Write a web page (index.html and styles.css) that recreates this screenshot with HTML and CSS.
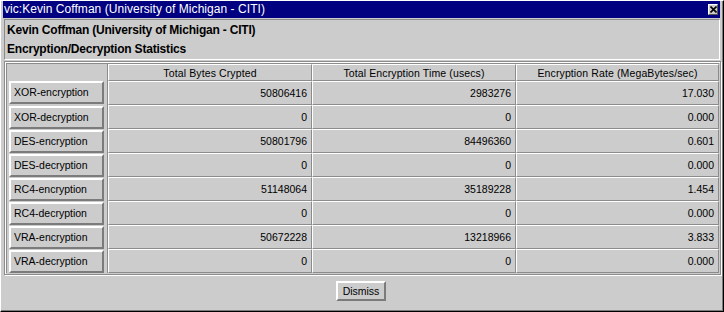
FILE: index.html
```html
<!DOCTYPE html>
<html>
<head>
<meta charset="utf-8">
<link rel="stylesheet" href="styles.css">
</head>
<body>
<div class="window">
  <div class="titlebar">
    <span class="title">vic:Kevin Coffman (University of Michigan - CITI)</span>
    <span class="close"><svg width="7" height="7" viewBox="0 0 7 7"><path d="M0.5 0.5 L6.5 6.5 M6.5 0.5 L0.5 6.5" stroke="#000" stroke-width="1.6"/></svg></span>
  </div>
  <div class="header">
    <div class="hline">Kevin Coffman (University of Michigan - CITI)</div>
    <div class="hline">Encryption/Decryption Statistics</div>
  </div>
  <div class="panel">
    <table class="stats">
      <colgroup><col class="c1"><col class="c2"><col class="c3"><col class="c4"></colgroup>
      <tr class="head"><th class="lab"></th><th>Total Bytes Crypted</th><th>Total Encryption Time (usecs)</th><th>Encryption Rate (MegaBytes/sec)</th></tr>
      <tr><td class="lab"><span class="btn">XOR-encryption</span></td><td>50806416</td><td>2983276</td><td>17.030</td></tr>
      <tr><td class="lab"><span class="btn">XOR-decryption</span></td><td>0</td><td>0</td><td>0.000</td></tr>
      <tr><td class="lab"><span class="btn">DES-encryption</span></td><td>50801796</td><td>84496360</td><td>0.601</td></tr>
      <tr><td class="lab"><span class="btn">DES-decryption</span></td><td>0</td><td>0</td><td>0.000</td></tr>
      <tr><td class="lab"><span class="btn">RC4-encryption</span></td><td>51148064</td><td>35189228</td><td>1.454</td></tr>
      <tr><td class="lab"><span class="btn">RC4-decryption</span></td><td>0</td><td>0</td><td>0.000</td></tr>
      <tr><td class="lab"><span class="btn">VRA-encryption</span></td><td>50672228</td><td>13218966</td><td>3.833</td></tr>
      <tr><td class="lab"><span class="btn">VRA-decryption</span></td><td>0</td><td>0</td><td>0.000</td></tr>
    </table>
  </div>
  <div class="footer"><span class="dismiss">Dismiss</span></div>
</div>
</body>
</html>
```
FILE: styles.css
```css
html, body { margin: 0; padding: 0; background: #cccccc; }
body { font-family: "Liberation Sans", Arial, sans-serif; }
.window {
  box-sizing: border-box;
  width: 724px; height: 312px;
  background: #cccccc;
  border-top: 1px solid #ffffff;
  border-left: 1px solid #ffffff;
  border-right: 1px solid #000000;
  border-bottom: 1px solid #000000;
  box-shadow: inset -1px -1px 0 #7b7b7b;
  padding: 0 3px 0 1px;
  display: flex; flex-direction: column;
}
.titlebar {
  height: 17px;
  margin-left: 1px;
  background: #000080;
  color: #ffffff;
  display: flex; align-items: center; justify-content: space-between;
  font-size: 12px;
  padding-left: 1px;
}
.title { line-height: 17px; letter-spacing: 0.05px; }
.close {
  box-sizing: border-box;
  width: 10px; height: 11px;
  margin-right: 2px;
  background: #cccccc;
  border-top: 1px solid #ffffff; border-left: 1px solid #ffffff;
  border-right: 1px solid #555; border-bottom: 1px solid #555;
  display: flex; align-items: center; justify-content: center;
}
.header {
  margin-top: 1px;
  margin-left: 2px;
  height: 41px;
  box-sizing: border-box;
  border-top: 1px solid #8b8b8b; border-left: 1px solid #8b8b8b;
  border-right: 1px solid #ffffff; border-bottom: 1px solid #ffffff;
  padding: 1px 0 0 2px;
  font-weight: bold;
  font-size: 12px;
  color: #000;
}
.hline { height: 19px; line-height: 19px; letter-spacing: -0.2px; }
.panel {
  margin-top: 1px;
  margin-left: 2px;
  margin-right: -1px;
  box-sizing: border-box;
  border: 1px solid #8b8b8b;
  box-shadow: inset 1px 1px 0 #ffffff, 1px 1px 0 #ffffff;
  padding: 1px;
}
.stats {
  border-collapse: separate; border-spacing: 0;
  table-layout: fixed;
  width: 713px;
  border-top: 1px solid #8b8b8b; border-left: 1px solid #8b8b8b;
  font-size: 10.5px;
  color: #000;
}
.c1 { width: 101px; } .c2 { width: 204px; } .c3 { width: 204px; } .c4 { width: 203px; }
.stats th, .stats td {
  box-sizing: border-box;
  padding: 0 4px 0 0;
  border-top: 1px solid #ffffff; border-left: 1px solid #ffffff;
  border-right: 1px solid #8b8b8b; border-bottom: 1px solid #8b8b8b;
  text-align: right;
  font-weight: normal;
  white-space: nowrap;
}
.stats th { height: 17px; text-align: center; padding: 0; letter-spacing: 0.12px; }
.stats td { height: 24px; }
.stats .lab { border-top: 0; border-bottom: 0; border-left: 0; padding: 0 0 0 2px; text-align: left; vertical-align: top; }
.stats tr.head .lab { height: 17px; }
.btn {
  box-sizing: border-box;
  display: block;
  width: 95px; height: 23px;
  margin-top: 1px;
  border-top: 2px solid #ffffff; border-left: 2px solid #ffffff;
  border-right: 2px solid #7b7b7b; border-bottom: 2px solid #7b7b7b;
  padding-left: 3px;
  line-height: 19px;
}
.stats tr:nth-child(2) .btn { margin-top: 0; }
.footer {
  flex: 1;
  display: flex; justify-content: center; align-items: flex-start;
  padding-top: 6px;
}
.dismiss {
  box-sizing: border-box;
  width: 50px; height: 20px;
  border-top: 2px solid #ffffff; border-left: 2px solid #ffffff;
  border-right: 2px solid #7b7b7b; border-bottom: 2px solid #7b7b7b;
  font-size: 10.5px;
  text-align: center;
  line-height: 16px;
}
```
